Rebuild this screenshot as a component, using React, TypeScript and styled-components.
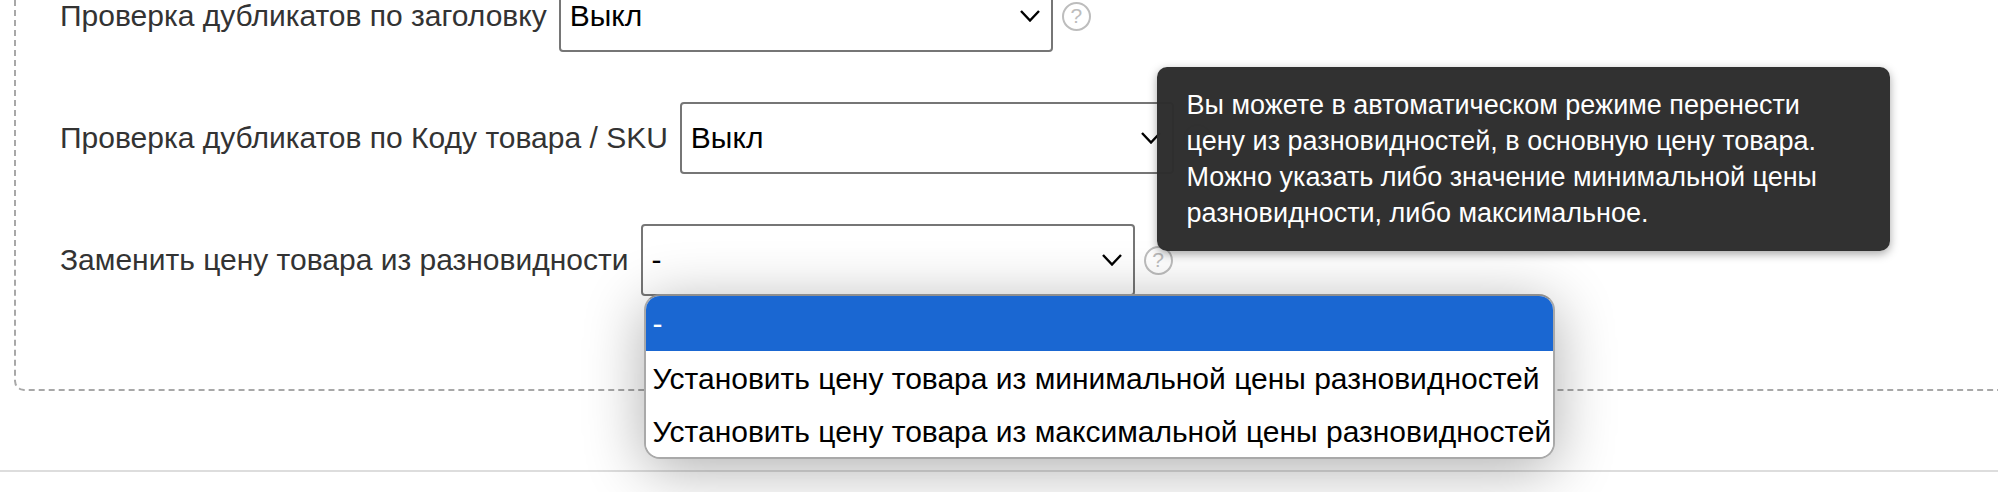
import React from 'react';
import styled, { createGlobalStyle } from 'styled-components';

const GlobalStyle = createGlobalStyle`
  html, body {
    margin: 0;
    padding: 0;
    background: #FFFFFF;
    overflow: hidden;
  }
  body {
    font-family: "Liberation Sans", Arial, sans-serif;
  }
`;

const Page = styled.div`
  width: 1998px;
  height: 492px;
  overflow: hidden;
`;

const Panel = styled.div`
  margin: -60px -40px 0 14px;
  padding: 38px 0 93px 44px;
  border: 2px dashed #a8a8a8;
  border-radius: 10px;
  display: flex;
  flex-direction: column;
  gap: 50px;
`;

const Row = styled.div`
  display: flex;
  align-items: center;
`;

const Label = styled.label`
  font-size: 30px;
  color: #333333;
  margin-right: 12px;
  white-space: nowrap;
`;

const SelectBox = styled.div`
  position: relative;
  box-sizing: border-box;
  width: 494px;
  height: 72px;
  padding: 0 11px 0 9px;
  border: 2px solid #767676;
  border-radius: 4px;
  background: #FFFFFF;
  display: flex;
  align-items: center;
  justify-content: space-between;
  font-size: 30px;
  color: #000000;
`;

const Chevron = styled.svg`
  width: 20px;
  height: 12px;
  fill: none;
  stroke: #000000;
  stroke-width: 2.4;
`;

const Help = styled.span`
  position: relative;
  box-sizing: border-box;
  width: 29px;
  height: 29px;
  margin-left: 9px;
  border: 2px solid #bdbdbd;
  border-radius: 50%;
  display: flex;
  align-items: center;
  justify-content: center;
  font-size: 21px;
  color: #bdbdbd;
`;

const Tooltip = styled.div`
  position: absolute;
  left: 11px;
  bottom: 22px;
  z-index: 3;
  box-sizing: border-box;
  width: 733px;
  padding: 20px 28px 20px 30px;
  border-radius: 10px;
  background: rgba(45, 45, 45, 0.98);
  box-shadow: 0 3px 10px rgba(0, 0, 0, 0.35);
  font-size: 27px;
  line-height: 36px;
  color: #FFFFFF;
`;

const Dropdown = styled.div`
  position: absolute;
  left: 1px;
  top: 100%;
  z-index: 2;
  box-sizing: border-box;
  width: 911px;
  border: 2px solid #a9a9a9;
  border-top-color: #8f8f8f;
  border-radius: 16px;
  background: #FFFFFF;
  overflow: hidden;
  box-shadow: 0 10px 60px rgba(0, 0, 0, 0.32);
`;

const Option = styled.div<{ $selected?: boolean }>`
  box-sizing: border-box;
  height: ${props => (props.$selected ? '55px' : '53px')};
  padding: ${props => (props.$selected ? '0' : '2px')} 0 0 7px;
  display: flex;
  align-items: center;
  white-space: nowrap;
  font-size: 30px;
  background: ${props => (props.$selected ? '#1a67d2' : '#FFFFFF')};
  color: ${props => (props.$selected ? '#FFFFFF' : '#000000')};
`;

const Footer = styled.div`
  margin-top: 79px;
  border-top: 2px solid #dddddd;
`;

const ChevronIcon = () => (
  <Chevron viewBox="0 0 20 12">
    <polyline points="1,1 10,10.5 19,1" />
  </Chevron>
);

const App: React.FC = () => {
  return (
    <Page>
      <GlobalStyle />
      <Panel>
        <Row>
          <Label>Проверка дубликатов по заголовку</Label>
          <SelectBox>
            Выкл
            <ChevronIcon />
          </SelectBox>
          <Help>?</Help>
        </Row>
        <Row>
          <Label>Проверка дубликатов по Коду товара / SKU</Label>
          <SelectBox>
            Выкл
            <ChevronIcon />
          </SelectBox>
          <Help>?</Help>
        </Row>
        <Row>
          <Label>Заменить цену товара из разновидности</Label>
          <SelectBox>
            -
            <ChevronIcon />
            <Dropdown>
              <Option $selected>-</Option>
              <Option>Установить цену товара из минимальной цены разновидностей</Option>
              <Option>Установить цену товара из максимальной цены разновидностей</Option>
            </Dropdown>
          </SelectBox>
          <Help>
            ?
            <Tooltip>
              Вы можете в автоматическом режиме перенести
              <br />
              цену из разновидностей, в основную цену товара.
              <br />
              Можно указать либо значение минимальной цены
              <br />
              разновидности, либо максимальное.
            </Tooltip>
          </Help>
        </Row>
      </Panel>
      <Footer />
    </Page>
  );
};

export default App;
